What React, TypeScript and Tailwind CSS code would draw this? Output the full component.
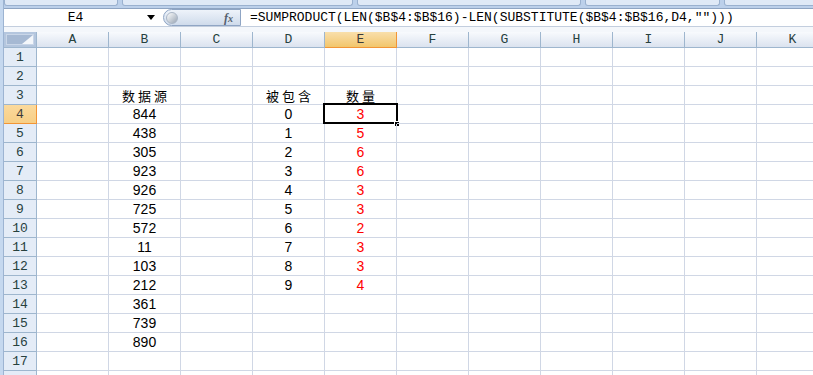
import React from 'react';

const cols = ['A', 'B', 'C', 'D', 'E', 'F', 'G', 'H', 'I', 'J', 'K'];

const bValues = ['844', '438', '305', '923', '926', '725', '572', '11', '103', '212', '361', '739', '890'];
const eValues = ['3', '5', '6', '6', '3', '3', '2', '3', '3', '4'];

// row -> col -> text
const cellText = (row: number, col: string): { text: string; red?: boolean; cjk?: boolean } | null => {
  if (row === 3) {
    if (col === 'B') return { text: '数据源', cjk: true };
    if (col === 'D') return { text: '被包含', cjk: true };
    if (col === 'E') return { text: '数量', cjk: true };
  }
  if (col === 'B' && row >= 4 && row <= 16) return { text: bValues[row - 4] };
  if (col === 'D' && row >= 4 && row <= 13) return { text: String(row - 4) };
  if (col === 'E' && row >= 4 && row <= 13) return { text: eValues[row - 4], red: true };
  return null;
};

const rows = Array.from({ length: 18 }, (_, i) => i + 1);

const App: React.FC = () => {
  return (
    <div className="w-[813px] h-[375px] overflow-hidden bg-white flex">
      {/* left window edge */}
      <div className="w-[4px] shrink-0 bg-[#c5d8ef] border-r border-[#9db4d2]" />

      <div className="flex-1 flex flex-col min-w-0 overflow-hidden">
        {/* ribbon bottom */}
        <div className="h-[8px] shrink-0 bg-[#bcd0ea] flex gap-[4px] items-start overflow-hidden">
          <div className="w-[114px] shrink-0 h-[6px] bg-[#dfe9f6] border-x border-b border-[#9ab1cf] rounded-b-[3px]" />
          <div className="w-[231px] shrink-0 h-[6px] bg-[#dfe9f6] border-x border-b border-[#9ab1cf] rounded-b-[3px]" />
          <div className="w-[224px] shrink-0 h-[6px] bg-[#dfe9f6] border-x border-b border-[#9ab1cf] rounded-b-[3px]" />
          <div className="w-[135px] shrink-0 h-[6px] bg-[#dfe9f6] border-x border-b border-[#9ab1cf] rounded-b-[3px]" />
          <div className="w-[100px] shrink-0 h-[6px] bg-[#dfe9f6] border-x border-b border-[#9ab1cf] rounded-b-[3px]" />
        </div>

        {/* formula bar */}
        <div className="h-[24px] shrink-0 flex flex-col border-t border-[#8ea4c2]">
          <div className="h-[18px] shrink-0 flex items-center bg-white border-b border-[#c3cede]">
            <div className="w-[156px] h-full flex items-center">
              <span className="flex-1 text-center text-[13px] text-black font-[family-name:Liberation_Mono,monospace] leading-none">E4</span>
              <svg width="8" height="5" viewBox="0 0 8 5" className="mr-[5px]">
                <path d="M0 0 L8 0 L4 5 Z" fill="#000" />
              </svg>
            </div>
            <div className="ml-[3px] w-[78px] h-full rounded-l-full border border-[#8fa5c4] bg-gradient-to-b from-[#eef3fa] to-[#cfdbeb] flex items-center">
              <div className="ml-[2px] w-[12px] h-[12px] rounded-full bg-gradient-to-br from-[#ffffff] to-[#9aa6b4] border border-[#aab6c6]" />
              <span className="ml-auto mr-[7px] text-[12px] italic font-bold text-[#55606e] font-[family-name:Liberation_Serif,serif] leading-none">
                f<span className="text-[10px]">x</span>
              </span>
            </div>
            <div className="ml-[9px] text-[13px] text-black font-[family-name:Liberation_Mono,monospace] leading-none whitespace-nowrap">
              =SUMPRODUCT(LEN($B$4:$B$16)-LEN(SUBSTITUTE($B$4:$B$16,D4,"")))
            </div>
          </div>
          <div className="flex-1 bg-[#f4f7fb]" />
        </div>

        {/* sheet */}
        <div className="shrink-0 grid grid-cols-[33px_repeat(11,72px)] grid-rows-[16px_repeat(18,19px)] font-[family-name:Liberation_Sans,Arial,sans-serif]">
          {/* corner */}
          <div className="border-r border-b border-[#9eb6ce] bg-[#b4c6de] p-[2px]">
            <div className="w-full h-full bg-[#a6b9d3] border border-[#c9d6e8] flex items-end justify-end">
              <svg width="11" height="9" viewBox="0 0 11 9">
                <path d="M11 0 L11 9 L0 9 Z" fill="#f4f7fb" />
              </svg>
            </div>
          </div>
          {cols.map(c => (
            <div
              key={c}
              className={`border-r border-b flex items-center justify-center text-[13px] leading-none font-[family-name:Liberation_Mono,monospace] ${
                c === 'E'
                  ? 'bg-gradient-to-b from-[#f9dfab] to-[#f2c66b] border-[#f29536] text-[#3b3b3b]'
                  : 'bg-gradient-to-b from-[#f8fafd] to-[#dbe3ef] border-[#9eb6ce] text-[#27413e]'
              }`}
            >
              {c}
            </div>
          ))}

          {rows.map(r => (
            <React.Fragment key={r}>
              <div
                className={`border-r border-b flex items-center justify-center text-[13px] leading-none font-[family-name:Liberation_Mono,monospace] ${
                  r === 4
                    ? 'bg-gradient-to-b from-[#fbd99c] to-[#f7cf86] border-[#f29536] text-[#3b3b3b]'
                    : 'bg-[#e4ecf7] border-[#9eb6ce] text-[#27413e]'
                }`}
              >
                {r < 18 ? r : ''}
              </div>
              {cols.map(c => {
                const cell = cellText(r, c);
                const active = r === 4 && c === 'E';
                return (
                  <div
                    key={c}
                    className="border-r border-b border-[#d0d7e5] flex items-center justify-center relative"
                  >
                    {cell && (
                      <span
                        className={`leading-none ${cell.red ? 'text-[#ff0000]' : 'text-black'} ${
                          cell.cjk
                            ? 'text-[13px] tracking-[3px] pl-[3px] font-[family-name:Noto_Sans_CJK_SC,sans-serif]'
                            : 'text-[14px]'
                        }`}
                      >
                        {cell.text}
                      </span>
                    )}
                    {active && (
                      <>
                        <div className="absolute -left-[2px] -top-[2px] -right-[2px] -bottom-[1px] border-2 border-black" />
                        <div className="absolute -right-[4px] -bottom-[4px] w-[6px] h-[6px] bg-black border border-white" />
                      </>
                    )}
                  </div>
                );
              })}
            </React.Fragment>
          ))}
        </div>
      </div>
    </div>
  );
};

export default App;
